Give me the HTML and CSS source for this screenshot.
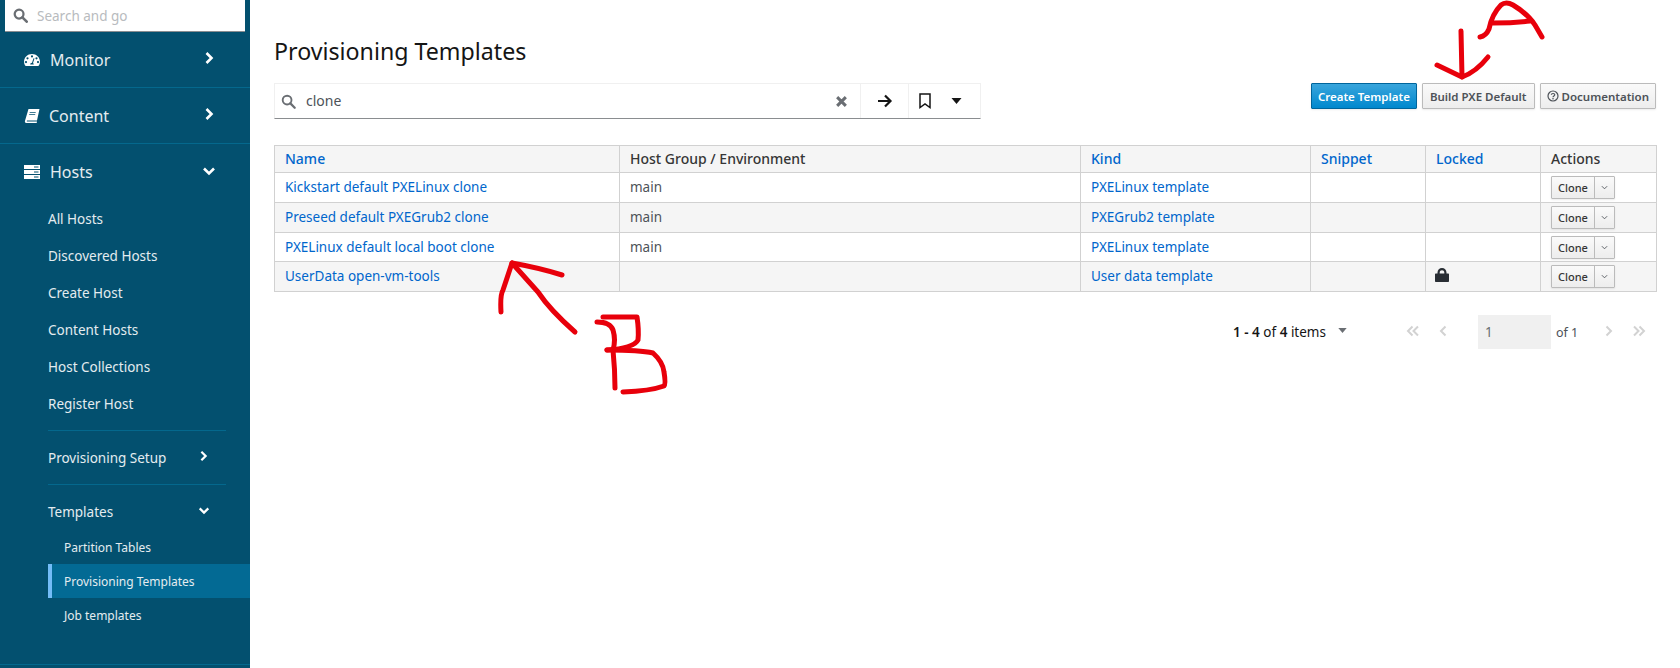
FILE: index.html
```html
<!DOCTYPE html>
<html lang="en">
<head>
<meta charset="utf-8">
<title>Provisioning Templates</title>
<link rel="stylesheet" href="styles.css">
</head>
<body>
<aside class="sidebar">
  <div class="nav-search">
    <svg class="nav-search-icon" viewBox="0 0 16 16"><circle cx="6.5" cy="6.5" r="4.7" fill="none" stroke="#6a6e73" stroke-width="2.4"/><path d="M10 10l4.600 4.600" stroke="#6a6e73" stroke-width="2.800" stroke-linecap="round"/></svg>
    <span>Search and go</span>
  </div>
  <div class="nav-top">
    <svg class="nav-icon" viewBox="0 0 16 16"><path fill="#fff" fill-rule="evenodd" d="M8 2C3.600 2 0 5.400 0 9.700c0 1.500.4 2.800 1.100 3.900.2.300.5.400.8.400h12.200c.3 0 .6-.1.8-.4.700-1.100 1.100-2.400 1.100-3.900C16 5.400 12.400 2 8 2zM8 3.300a1.100 1.100 0 110 2.200 1.100 1.100 0 010-2.200zM3.500 5.200a1.100 1.100 0 110 2.200 1.100 1.100 0 010-2.200zM2 9a1.100 1.100 0 110 2.200A1.100 1.100 0 012 9zM14 9a1.100 1.100 0 110 2.200A1.100 1.100 0 0114 9zM12.500 5.200a1.100 1.100 0 110 2.200 1.100 1.100 0 010-2.200zM10.500 6.500L9 11c.6.400.8 1 .8 1.500H6.200c0-1 .8-1.800 1.800-1.800l1.500-4.500z"/></svg>
    <span class="nav-label">Monitor</span>
    <svg class="nav-chev" viewBox="0 0 10 14"><path d="M2.500 2l5 5-5 5" fill="none" stroke="#fff" stroke-width="2.600"/></svg>
  </div>
  <div class="nav-top">
    <svg class="nav-icon" viewBox="0 0 16 16"><path fill="#fff" fill-rule="evenodd" d="M4.500 1H15.500L13 12.500H3.600C2.900 12.500 2.600 13 3 13.600H13L12.700 15H2.500C1.200 15 .6 14 1 12.700zM5.800 4.200H11.800L11.600 5H5.600zM5.300 6.200H11.300L11.100 7H5.100z"/></svg>
    <span class="nav-label nav-label-book">Content</span>
    <svg class="nav-chev" viewBox="0 0 10 14"><path d="M2.500 2l5 5-5 5" fill="none" stroke="#fff" stroke-width="2.600"/></svg>
  </div>
  <div class="nav-top nav-top-open">
    <svg class="nav-icon" viewBox="0 0 16 16"><path fill="#fff" fill-rule="evenodd" d="M0 1h16v4H0zM0 6h16v4H0zM0 11h16v4H0zM10 2.500v1h4.500v-1zM10 7.500v1h4.500v-1zM10 12.500v1h4.500v-1z"/></svg>
    <span class="nav-label">Hosts</span>
    <svg class="nav-chev-down" viewBox="0 0 14 10"><path d="M2 2.500l5 5 5-5" fill="none" stroke="#fff" stroke-width="2.600"/></svg>
  </div>
  <div class="nav-sub">All Hosts</div>
  <div class="nav-sub">Discovered Hosts</div>
  <div class="nav-sub">Create Host</div>
  <div class="nav-sub">Content Hosts</div>
  <div class="nav-sub">Host Collections</div>
  <div class="nav-sub">Register Host</div>
  <div class="nav-group nav-group-first">
    <span>Provisioning Setup</span>
    <svg class="nav-chev-sm" viewBox="0 0 10 14"><path d="M2.500 2l5 5-5 5" fill="none" stroke="#fff" stroke-width="2.600"/></svg>
  </div>
  <div class="nav-group nav-group-open">
    <span>Templates</span>
    <svg class="nav-chev-sm-down" viewBox="0 0 14 10"><path d="M2 2.500l5 5 5-5" fill="none" stroke="#fff" stroke-width="2.600"/></svg>
  </div>
  <div class="nav-leaf">Partition Tables</div>
  <div class="nav-leaf nav-leaf-active">Provisioning Templates</div>
  <div class="nav-leaf">Job templates</div>
  <div class="nav-end"></div>
</aside>

<main class="main">
  <h1 class="title">Provisioning Templates</h1>
  <div class="toolbar">
    <div class="search">
      <div class="search-input">
        <svg class="search-icon" viewBox="0 0 16 16"><circle cx="6.500" cy="6.500" r="4.700" fill="none" stroke="#6a6e73" stroke-width="2"/><path d="M10 10l4.600 4.600" stroke="#6a6e73" stroke-width="2.400" stroke-linecap="round"/></svg>
        <span class="search-text">clone</span>
        <svg class="search-clear" viewBox="0 0 12 12"><path d="M2 2l8 8M10 2l-8 8" stroke="#6a6e73" stroke-width="2.800"/></svg>
      </div>
      <div class="search-go">
        <svg class="go-icon" viewBox="0 0 16 16"><path d="M1 8h12.500M8 2.500L13.500 8 8 13.500" fill="none" stroke="#151515" stroke-width="2.200"/></svg>
      </div>
      <div class="search-book">
        <svg class="book-icon" viewBox="0 0 12 16"><path d="M1 1h10v13.500l-5-3.500-5 3.500z" fill="none" stroke="#151515" stroke-width="1.500"/></svg>
        <svg class="book-caret" viewBox="0 0 10 6"><path d="M0 0h10L5 6z" fill="#151515"/></svg>
      </div>
    </div>
    <div class="actions">
      <a class="btn btn-primary">Create Template</a>
      <a class="btn btn-build">Build PXE Default</a>
      <a class="btn btn-doc"><svg class="doc-icon" viewBox="0 0 12 12"><circle cx="6" cy="6" r="5" fill="none" stroke="#4d5258" stroke-width="1.200"/><path d="M4.300 4.700C4.400 3.100 7.800 3.100 7.800 4.800 7.800 6 6 5.900 6 7.200" fill="none" stroke="#4d5258" stroke-width="1.200"/><circle cx="6" cy="8.800" r=".8" fill="#4d5258"/></svg>Documentation</a>
    </div>
  </div>

  <table class="grid">
    <colgroup>
      <col class="c-name"><col class="c-group"><col class="c-kind"><col class="c-snip"><col class="c-lock"><col class="c-act">
    </colgroup>
    <thead>
      <tr class="r-head">
        <th class="sort">Name</th><th>Host Group / Environment</th><th class="sort">Kind</th><th class="sort">Snippet</th><th class="sort">Locked</th><th>Actions</th>
      </tr>
    </thead>
    <tbody>
      <tr class="r-a">
        <td class="link">Kickstart default PXELinux clone</td><td>main</td><td class="link">PXELinux template</td><td></td><td></td>
        <td><span class="split"><span class="split-main">Clone</span><span class="split-caret"><svg viewBox="0 0 8 5"><path d="M1 1l3 3 3-3" fill="none" stroke="#4d5258"/></svg></span></span></td>
      </tr>
      <tr class="r-b">
        <td class="link">Preseed default PXEGrub2 clone</td><td>main</td><td class="link">PXEGrub2 template</td><td></td><td></td>
        <td><span class="split"><span class="split-main">Clone</span><span class="split-caret"><svg viewBox="0 0 8 5"><path d="M1 1l3 3 3-3" fill="none" stroke="#4d5258"/></svg></span></span></td>
      </tr>
      <tr class="r-c">
        <td class="link">PXELinux default local boot clone</td><td>main</td><td class="link">PXELinux template</td><td></td><td></td>
        <td><span class="split"><span class="split-main">Clone</span><span class="split-caret"><svg viewBox="0 0 8 5"><path d="M1 1l3 3 3-3" fill="none" stroke="#4d5258"/></svg></span></span></td>
      </tr>
      <tr class="r-b">
        <td class="link">UserData open-vm-tools</td><td></td><td class="link">User data template</td><td></td>
        <td><svg class="lock" viewBox="0 0 14 14"><path fill="#292e34" fill-rule="evenodd" d="M2.500 5.500V4.500C2.500 1.800 4.500 0 7 0s4.500 1.800 4.500 4.500v1h1.500c.6 0 1 .4 1 1v6.500c0 .6-.4 1-1 1H1c-.6 0-1-.4-1-1V6.500c0-.6.4-1 1-1zM4.700 5.500h4.600V4.500C9.300 3 8.200 2.200 7 2.200S4.700 3 4.700 4.500z"/></svg></td>
        <td><span class="split"><span class="split-main">Clone</span><span class="split-caret"><svg viewBox="0 0 8 5"><path d="M1 1l3 3 3-3" fill="none" stroke="#4d5258"/></svg></span></span></td>
      </tr>
    </tbody>
  </table>

  <div class="pager">
    <span class="pager-count"><b>1 - 4</b> of <b>4</b> items</span>
    <svg class="pager-caret" viewBox="0 0 10 6"><path d="M0 0h10L5 6z" fill="#6a6e73"/></svg>
    <svg class="pager-icon pager-dbl-first" viewBox="0 0 14 12"><path d="M6.500 1.500L2 6l4.500 4.500M12 1.500L7.500 6l4.500 4.500" fill="none" stroke="#d2d2d2" stroke-width="2"/></svg>
    <svg class="pager-icon pager-prev" viewBox="0 0 8 12"><path d="M6.500 1.500L2 6l4.500 4.500" fill="none" stroke="#d2d2d2" stroke-width="2"/></svg>
    <span class="pager-input">1</span>
    <span class="pager-of">of 1</span>
    <svg class="pager-icon pager-next" viewBox="0 0 8 12"><path d="M1.500 1.500L6 6l-4.500 4.500" fill="none" stroke="#d2d2d2" stroke-width="2"/></svg>
    <svg class="pager-icon pager-dbl-last" viewBox="0 0 14 12"><path d="M2 1.500L6.500 6 2 10.500M7.500 1.500L12 6l-4.500 4.500" fill="none" stroke="#d2d2d2" stroke-width="2"/></svg>
  </div>
</main>

<svg class="scribble" viewBox="0 0 1680 668">
  <g fill="none" stroke="#e8000b" stroke-width="5" stroke-linecap="round" stroke-linejoin="round">
    <path d="M1480 37Q1486 36 1489 29Q1492 14 1501 5Q1506 1 1513 5Q1528 14 1535 25L1542 37"/>
    <path d="M1493 23Q1513 23 1530 21"/>
    <path d="M1461 31L1462 77"/>
    <path d="M1437 65L1462 77Q1476 72 1488 57"/>
    <path d="M575 332Q550 310 538 292L512 263"/>
    <path d="M501 312Q500 295 503 290L512 263Q540 268 562 275"/>
    <path d="M597 322Q610 322 613 330Q616 340 613 350Q615 370 615 388"/>
    <path d="M603 317L637 317Q639 330 638 340Q634 348 607 350"/>
    <path d="M607 350Q640 350 653 353Q663 362 664 372Q666 384 664 386Q650 391 623 392"/>
  </g>
</svg>
</body>
</html>
```
FILE: styles.css
```css
* { box-sizing: border-box; }
html, body { margin: 0; height: 668px; overflow: hidden; }
body {
  position: relative;
  display: flex;
  background: #fff;
  font-family: "Noto Sans", "Liberation Sans", sans-serif;
  color: #151515;
}

/* sidebar */
.sidebar {
  width: 250px;
  height: 668px;
  flex: none;
  background: #03506f;
  color: #e4ecf0;
  display: flex;
  flex-direction: column;
}
.nav-search {
  margin: 0 5px;
  width: 240px;
  height: 32px;
  flex: none;
  background: #fff;
  border-bottom: 1px solid #8a8d90;
  display: flex;
  align-items: center;
  padding-left: 8px;
  gap: 9px;
  font-size: 13.5px;
  color: #b8bbbe;
}
.nav-search-icon { width: 15px; height: 15px; }
.nav-top {
  height: 56px;
  flex: none;
  display: flex;
  align-items: center;
  padding-left: 24px;
  border-bottom: 1px solid #04688d;
}
.nav-top-open { border-bottom: 0; }
.nav-icon { width: 16px; height: 16px; flex: none; }
.nav-label { font-size: 16px; margin-left: 10px; flex: 1; }
.nav-label-book { margin-left: 9px; }
.nav-chev { width: 10px; height: 14px; margin-right: 36px; margin-top: -3px; }
.nav-chev-down { width: 14px; height: 10px; margin-right: 34px; margin-top: -3px; }
.nav-sub {
  height: 37px;
  flex: none;
  display: flex;
  align-items: center;
  padding-left: 48px;
  font-size: 13.5px;
}
.nav-group {
  margin-left: 48px;
  width: 178px;
  flex: none;
  display: flex;
  align-items: center;
  justify-content: space-between;
  font-size: 13.5px;
  padding-right: 18px;
}
.nav-group-first {
  height: 55px;
  margin-top: 8px;
  border-top: 1px solid #04688d;
  border-bottom: 1px solid #04688d;
}
.nav-group-open { height: 45px; padding-top: 9px; }
.nav-chev-sm { width: 9px; height: 12px; margin-top: -3px; }
.nav-chev-sm-down { width: 12px; height: 9px; margin-right: -2px; margin-top: -3px; }
.nav-leaf {
  height: 34px;
  flex: none;
  margin-left: 48px;
  padding-left: 16px;
  display: flex;
  align-items: center;
  font-size: 12px;
}
.nav-leaf-active {
  background: #036a94;
  border-left: 4px solid #73bcf7;
  padding-left: 12px;
}
.nav-end {
  margin-top: 32px;
  border-top: 1px solid #04688d;
}

/* main */
.main {
  flex: 1;
  min-width: 0;
  padding: 0 24px;
  display: flex;
  flex-direction: column;
}
.title {
  margin: 35px 0 0;
  font-size: 23.2px;
  line-height: 32px;
  font-weight: 400;
  height: 48px;
}
.toolbar {
  display: flex;
  justify-content: space-between;
  align-items: flex-start;
}
.search {
  width: 707px;
  height: 36px;
  display: flex;
  border: 1px solid #f0f0f0;
  border-bottom: 1px solid #8a8d90;
}
.search-input {
  flex: 1;
  display: flex;
  align-items: center;
  padding-left: 6px;
  border-right: 1px solid #f0f0f0;
}
.search-icon { width: 15px; height: 15px; }
.search-text { flex: 1; margin: -2px 0 0 10px; font-size: 14px; color: #4d5258; }
.search-clear { width: 13px; height: 13px; margin-right: 12px; }
.search-go {
  width: 48px;
  display: flex;
  align-items: center;
  justify-content: center;
  border-right: 1px solid #f0f0f0;
}
.go-icon { width: 16px; height: 16px; }
.search-book {
  width: 71px;
  display: flex;
  align-items: center;
  padding-left: 10px;
  gap: 20px;
}
.book-icon { width: 12px; height: 16px; }
.book-caret { width: 11px; height: 6px; }
.actions { display: flex; gap: 5px; }
.btn {
  height: 26px;
  padding: 0 6px;
  display: flex;
  align-items: center;
  border: 1px solid #bbb;
  border-radius: 1px;
  background: linear-gradient(#fafafa, #ededed);
  color: #4d5258;
  font-size: 11.5px;
  font-weight: 600;
  box-shadow: 0 1px 2px rgba(0,0,0,.08);
}
.btn-primary {
  border-color: #00659c;
  background: linear-gradient(#39a5dc, #0088ce);
  color: #fff;
}
.btn-build { padding: 0 7px; }
.btn-doc { gap: 3px; padding: 0 6px; }
.doc-icon { width: 12px; height: 12px; }

/* table */
.grid {
  margin-top: 26px;
  width: 1382px;
  table-layout: fixed;
  border-collapse: collapse;
  font-size: 13.5px;
  color: #4d5258;
}
.c-name { width: 345px; }
.c-group { width: 461px; }
.c-kind { width: 230px; }
.c-snip { width: 115px; }
.c-lock { width: 115px; }
.c-act { width: 116px; }
.grid th, .grid td {
  border: 1px solid #d1d1d1;
  padding: 0 10px 2px;
  text-align: left;
  overflow: hidden;
  white-space: nowrap;
}
.grid th { font-weight: 500; color: #363636; background: #f5f5f5; font-size: 14px; }
.grid th.sort { color: #0066cc; }
.grid td.link { color: #0066cc; }
.r-head { height: 27px; }
.r-a, .r-b { height: 30px; }
.r-c { height: 29px; }
.r-c td { padding-bottom: 1px; }
.r-b td { background: #f5f5f5; }
.split {
  display: inline-flex;
  height: 23px;
  vertical-align: middle;
  margin-top: 1px;
  border: 1px solid #bbb;
  border-radius: 1px;
  background: linear-gradient(#fafafa, #ededed);
  box-shadow: 0 1px 2px rgba(0,0,0,.08);
  font-size: 11px;
  font-weight: 500;
  color: #363636;
}
.split-main {
  width: 43px;
  display: flex;
  align-items: center;
  justify-content: center;
  border-right: 1px solid #bbb;
}
.split-caret {
  width: 19px;
  display: flex;
  align-items: center;
  justify-content: center;
}
.split-caret svg { width: 7px; height: 5px; }
.lock { width: 14px; height: 14px; display: block; margin: -2px 0 0 -1px; }

/* pager */
.pager {
  margin-top: 23px;
  height: 34px;
  display: flex;
  align-items: center;
  font-size: 13.5px;
  color: #151515;
  padding-left: 959px;
}
.pager-count { width: 96px; white-space: nowrap; }
.pager-count b { font-weight: 600; }
.pager-caret { width: 9px; height: 5px; margin-left: 9px; margin-top: -3px; }
.pager-icon { height: 12px; margin-top: -2px; flex: none; }
.pager-dbl-first { width: 14px; margin-left: 59px; }
.pager-prev { width: 8px; margin-left: 19px; }
.pager-input {
  width: 73px;
  height: 34px;
  margin-left: 31px;
  background: #f0f0f0;
  color: #6a6e73;
  padding-left: 7px;
  display: flex;
  align-items: center;
}
.pager-of { margin-left: 5px; width: 22px; font-size: 12.5px; color: #4d5258; white-space: nowrap; }
.pager-next { width: 8px; margin-left: 27px; }
.pager-dbl-last { width: 14px; margin-left: 19px; }

/* hand-drawn annotations over the page */
.scribble {
  position: absolute;
  left: 0;
  top: 0;
  width: 1680px;
  height: 668px;
  pointer-events: none;
}
```
